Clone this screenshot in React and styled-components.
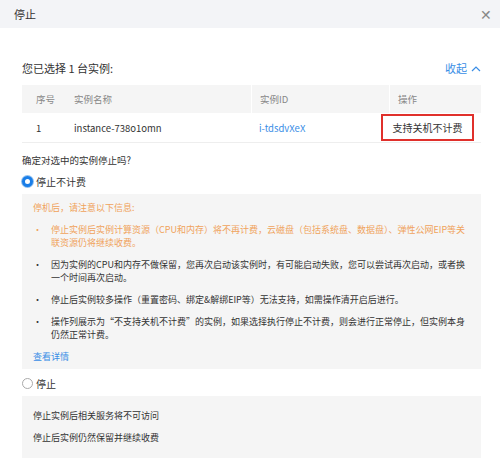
import React from "react";
import styled, { createGlobalStyle } from "styled-components";

const Global = createGlobalStyle`
  body { margin: 0; background: #fff; font-family: "Noto Sans CJK SC", "Liberation Sans", sans-serif; }
`;

const Header = styled.div`
  height: 28px;
  background: #f3f4f7;
  display: flex;
  align-items: center;
  justify-content: space-between;
  padding: 0 8px 0 14px;
  font-size: 11px;
  color: #333;
`;

const Close = styled.span`
  font-size: 14px;
  color: #888;
`;

const Body = styled.div`
  padding: 32px 19px 0 22px;
  font-size: 9.5px;
  color: #333;
`;

const TopRow = styled.div`
  display: flex;
  justify-content: space-between;
  align-items: center;
  font-size: 11px;
  height: 16px;
  margin-bottom: 9px;
`;

const Link = styled.span`
  color: #3a8ee6;
  display: flex;
  align-items: center;
  gap: 4px;
`;

const Table = styled.div`
  display: grid;
  grid-template-columns: 229px 138px 1fr;
  border-bottom: 1px solid #eee;
`;

const Th = styled.div`
  background: #f5f5f5;
  height: 28px;
  display: flex;
  align-items: center;
  color: #888;
  padding-left: 8px;
  border-left: ${(p) => (p.$first ? "none" : "1px solid #fff")};
`;

const Td = styled.div`
  height: 29px;
  display: flex;
  align-items: center;
  padding-left: 8px;
  color: ${(p) => (p.$link ? "#3a8ee6" : "#333")};
`;

const Num = styled.span`
  width: 38px;
  padding-left: 6px;
`;

const RedBox = styled.div`
  margin-left: -16px;
  width: 89px;
  height: 23px;
  border: 2px solid #e0302b;
  display: flex;
  align-items: center;
  justify-content: center;
  font-size: 10px;
`;

const Question = styled.div`
  margin-top: 10px;
  height: 14px;
  display: flex;
  align-items: center;
`;

const Radio = styled.label`
  display: flex;
  align-items: center;
  gap: 3px;
  height: 20px;
  margin: 4px 0 3px;
  font-size: 10px;
`;

const Dot = styled.span`
  width: 11px;
  height: 11px;
  border-radius: 50%;
  box-sizing: border-box;
  border: ${(p) => (p.$on ? "3px solid #1a7ee8" : "1px solid #aaa")};
  background: #fff;
  box-shadow: ${(p) => (p.$on ? "0 0 0 1px #8fc0f0" : "none")};
`;

const Box = styled.div`
  background: #f5f5f5;
  padding: 6px 10px 6px 11px;
  line-height: 13px;
  font-size: 9px;
`;

const Warn = styled.div`
  color: #f0a35c;
  margin: 1px 0 9px;
`;

const Item = styled.div`
  display: flex;
  gap: 9px;
  margin-bottom: 9px;
  color: ${(p) => (p.$warn ? "#f0a35c" : "#333")};
`;

const Plain = styled.div`
  margin: 7px 0 9px;
`;

const Row = styled.div`
  display: flex;
`;

export default function App() {
  return (
    <>
      <Global />
      <Header>
        <span>停止</span>
        <Close>✕</Close>
      </Header>
      <Body>
        <TopRow>
          <span>您已选择 1 台实例:</span>
          <Link>
            收起
            <svg width="10" height="7" viewBox="0 0 10 7">
              <path d="M1 6 L5 2 L9 6" fill="none" stroke="#3a8ee6" strokeWidth="1.2" />
            </svg>
          </Link>
        </TopRow>
        <Table>
          <Th $first><Num>序号</Num>实例名称</Th>
          <Th>实例ID</Th>
          <Th>操作</Th>
          <Td><Num>1</Num>instance-738o1omn</Td>
          <Td $link>i-tdsdvXeX</Td>
          <Td><RedBox>支持关机不计费</RedBox></Td>
        </Table>
        <Question>确定对选中的实例停止吗?</Question>
        <Radio><Dot $on />停止不计费</Radio>
        <Box>
          <Warn>停机后，请注意以下信息:</Warn>
          <Item $warn><span>•</span><span>停止实例后实例计算资源（CPU和内存）将不再计费，云磁盘（包括系统盘、数据盘）、弹性公网EIP等关联资源仍将继续收费。</span></Item>
          <Item><span>•</span><span>因为实例的CPU和内存不做保留，您再次启动该实例时，有可能启动失败，您可以尝试再次启动，或者换一个时间再次启动。</span></Item>
          <Item><span>•</span><span>停止后实例较多操作（重置密码、绑定&amp;解绑EIP等）无法支持，如需操作清开启后进行。</span></Item>
          <Item><span>•</span><span>操作列展示为“不支持关机不计费”的实例，如果选择执行停止不计费，则会进行正常停止，但实例本身仍然正常计费。</span></Item>
          <Row><Link>查看详情</Link></Row>
        </Box>
        <Radio><Dot />停止</Radio>
        <Box>
          <Plain>停止实例后相关服务将不可访问</Plain>
          <Plain>停止后实例仍然保留并继续收费</Plain>
        </Box>
      </Body>
    </>
  );
}
